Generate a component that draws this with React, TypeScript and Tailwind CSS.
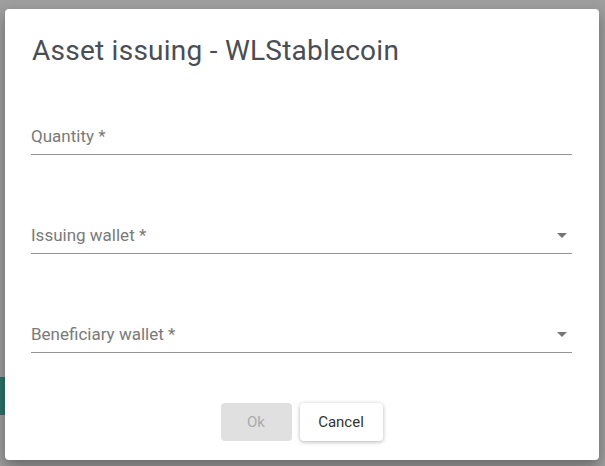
import React from "react";

const fields = [
  { label: "Quantity *", select: false },
  { label: "Issuing wallet *", select: true },
  { label: "Beneficiary wallet *", select: true },
];

const Field = ({ label, select }: { label: string; select: boolean }) => (
  <div className="flex items-center justify-between border-b border-[#949494] pb-[6px]">
    <span className="text-[17px] leading-[24px] text-[#7a7a7a]">{label}</span>
    {select && (
      <svg width="10" height="5" viewBox="0 0 10 5" className="mr-[5px]">
        <path d="M0 0 L10 0 L5 5 Z" fill="#757575" />
      </svg>
    )}
  </div>
);

const App = () => {
  return (
    <div
      className="flex w-[605px] h-[466px] bg-[#9e9e9e] overflow-hidden"
      style={{ fontFamily: "Roboto, 'Liberation Sans', sans-serif" }}
    >
      {/* page behind the backdrop */}
      <div className="w-[5px] shrink-0 flex flex-col">
        <div className="h-[377px]" />
        <div className="h-[38px] bg-[#2b7466]" />
      </div>

      <div className="mt-[9px] w-[594px] h-[451px] bg-white rounded-[4px] shadow-[0_6px_14px_rgba(0,0,0,0.35)] flex flex-col pt-[26px] pl-[26px] pr-[27px]">
        <h2 className="text-[28px] leading-[32px] tracking-[0.25px] text-[#4a4e54] pl-[1px]">Asset issuing - WLStablecoin</h2>

        <div className="mt-[57px] flex flex-col gap-[68px]">
          {fields.map((f) => (
            <Field key={f.label} label={f.label} select={f.select} />
          ))}
        </div>

        <div className="mt-[50px] flex justify-center gap-[8px]">
          <button className="w-[71px] h-[38px] rounded-[4px] bg-[#e0e0e0] text-[15px] text-[#ababab]">Ok</button>
          <button className="w-[83px] h-[38px] rounded-[4px] bg-white text-[15px] text-[#333] shadow-[0_1px_4px_rgba(0,0,0,0.3)]">
            Cancel
          </button>
        </div>
      </div>
    </div>
  );
};

export default App;
